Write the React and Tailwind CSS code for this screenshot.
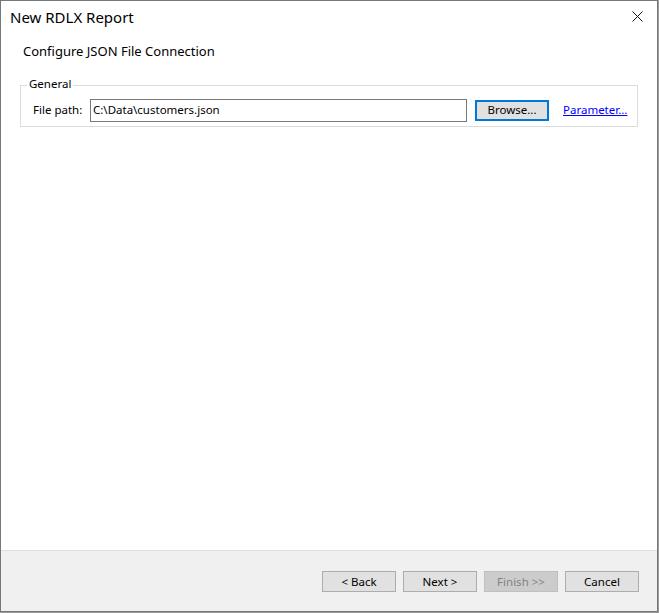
const FONT = { fontFamily: '"Segoe UI", "Noto Sans", "Open Sans", sans-serif' }

function DlgButton({ children, disabled, focused }) {
  return (
    <button
      className={`h-[21px] w-[74px] text-[11.5px] leading-none flex items-center justify-center ${
        disabled
          ? 'bg-[#cccccc] border border-[#bfbfbf] text-[#838383]'
          : focused
          ? 'bg-[#e1e1e1] border-2 border-[#0078d7] text-black'
          : 'bg-[#e1e1e1] border border-[#adadad] text-black'
      }`}
    >
      {children}
    </button>
  )
}

export default function App() {
  return (
    <div className="w-[659px] h-[613px] bg-[#9a9a9a]" style={FONT}>
      <div className="w-[658px] h-[612px] border border-[#777777] bg-white flex flex-col">
        {/* Title bar */}
        <div className="h-[32px] flex items-center justify-between pl-[9px] pr-[12px]">
          <span className="text-[15px] text-black">New RDLX Report</span>
          <svg width="11" height="11" viewBox="0 0 11 11" className="mr-[2px] mt-[-1px]">
            <path d="M0.5 0.5 L10.5 10.5 M10.5 0.5 L0.5 10.5" stroke="#111" strokeWidth="1" />
          </svg>
        </div>

        {/* Body */}
        <div className="flex-1 px-[19px]">
          <div className="pl-[3px] pt-[9px] text-[13px] text-black">Configure JSON File Connection</div>

          <div className="relative mt-[23px] h-[42px] border border-[#dcdcdc]">
            <span className="absolute left-[6px] top-[-10px] bg-white px-[2px] text-[11.5px] leading-[16px] text-black">
              General
            </span>
            <div className="flex items-center pl-[12px] pt-[13px]">
              <span className="text-[11.5px] text-black w-[57px]">File path:</span>
              <div className="w-[377px] h-[23px] border border-[#7a7a7a] flex items-center pl-[2px] text-[11.5px] text-black">
                C:\Data\customers.json
              </div>
              <div className="ml-[8px]">
                <DlgButton focused>Browse...</DlgButton>
              </div>
              <a className="ml-[14px] text-[11.5px] text-[#0000ff] underline cursor-pointer">Parameter...</a>
            </div>
          </div>
        </div>

        {/* Footer */}
        <div className="h-[61px] border-t border-[#dfdfdf] bg-[#f0f0f0] flex justify-end items-start pt-[20px] pr-[18px] gap-[7px]">
          <DlgButton>&lt; Back</DlgButton>
          <DlgButton>Next &gt;</DlgButton>
          <DlgButton disabled>Finish &gt;&gt;</DlgButton>
          <DlgButton>Cancel</DlgButton>
        </div>
      </div>
    </div>
  )
}
